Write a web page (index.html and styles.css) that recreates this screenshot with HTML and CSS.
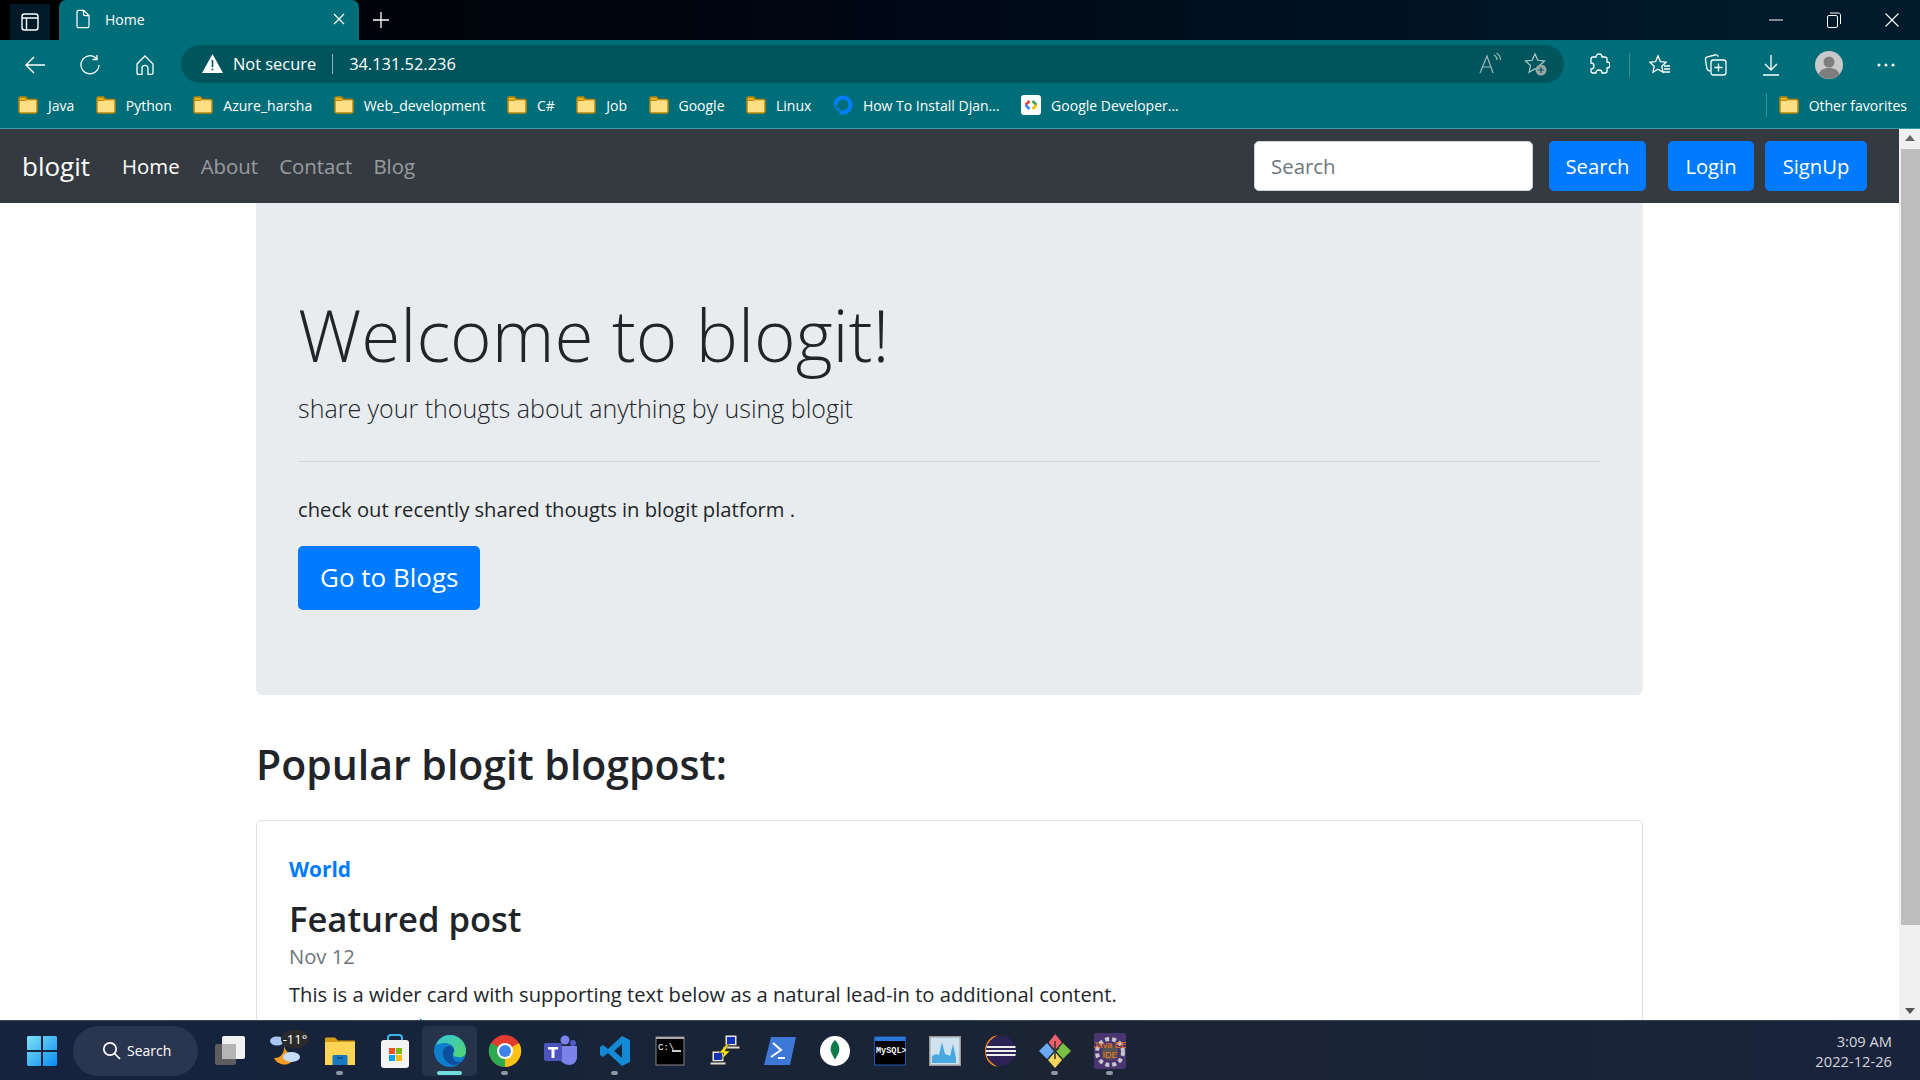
FILE: index.html
```html
<!DOCTYPE html>
<html lang="en">
<head>
    <meta charset="UTF-8">
    <title>Home</title>
    <link rel="stylesheet" href="styles.css">
</head>
<body>
    <svg class="defs" width="0" height="0">
        <symbol id="folder" viewBox="0 0 20 20">
            <path d="M1 3.500C1 2.700 1.600 2 2.400 2h5l2 2.500h8.200c.8 0 1.400.6 1.400 1.400v10.700c0 .8-.6 1.400-1.400 1.400H2.400c-.8 0-1.400-.6-1.400-1.400z" fill="#ffdf85" stroke="#b8860b" stroke-width="1.500"/>
            <path d="M1.500 5.500V3.500c0-.6.4-1 1-1h4.700l1.600 2.200-1 .8z" fill="#e9b022" stroke="#b8860b"/>
        </symbol>
    </svg>

    <header class="tabstrip">
        <div class="sidebar-btn">
            <svg width="20" height="20" viewBox="0 0 20 20" fill="none" stroke="#fff" stroke-width="1.400"><rect x="2" y="2" width="16" height="16" rx="2.500"/><path d="M2 6h16M6.500 6v12"/></svg>
        </div>
        <div class="tab">
            <svg width="18" height="20" viewBox="0 0 18 20" fill="none" stroke="#fff" stroke-width="1.200"><path d="M3 3c0-1 .7-1.700 1.700-1.700h5L15 6.600V17c0 1-.7 1.700-1.700 1.700H4.700C3.700 18.700 3 18 3 17zM9.500 1.500V5c0 1 .7 1.700 1.700 1.700h3.600"/></svg>
            <span class="tab-title">Home</span>
            <svg class="tab-close" width="12" height="12" viewBox="0 0 12 12" stroke="#fff" stroke-width="1.200"><path d="M1 1l10 10M11 1L1 11"/></svg>
        </div>
        <svg class="new-tab" width="18" height="18" viewBox="0 0 18 18" stroke="#fff" stroke-width="1.300"><path d="M9 1v16M1 9h16"/></svg>
        <div class="win-controls">
            <svg width="14" height="14" viewBox="0 0 14 14" stroke="#fff"><path d="M0 7h14"/></svg>
            <svg width="14" height="16" viewBox="0 0 14 16" fill="none" stroke="#fff"><rect x=".5" y="3.500" width="10" height="12" rx="1.500"/><path d="M3 1h8.500c1 0 2 1 2 2v9"/></svg>
            <svg width="14" height="14" viewBox="0 0 14 14" stroke="#fff" stroke-width="1.100"><path d="M.5.500l13 13M13.500.500l-13 13"/></svg>
        </div>
    </header>

    <nav class="toolbar">
        <svg class="tool back" width="22" height="20" viewBox="0 0 22 20" fill="none" stroke="#fff" stroke-width="1.400"><path d="M21 10H2M10 2l-8 8 8 8"/></svg>
        <svg class="tool reload" width="22" height="22" viewBox="0 0 22 22" fill="none" stroke="#fff" stroke-width="1.300"><path d="M17.500 4.500A9 9 0 1 0 20 11M18 1v4.500h-4.500"/></svg>
        <svg class="tool home" width="20" height="22" viewBox="0 0 20 22" fill="none" stroke="#fff" stroke-width="1.300"><path d="M2 10l8-8 8 8v9c0 .8-.6 1.400-1.400 1.400H13v-6a3 3 0 0 0-6 0v6H3.400C2.600 20.400 2 19.800 2 19z"/></svg>
        <div class="address">
            <svg width="21" height="19" viewBox="0 0 21 19"><path d="M10.500 0L21 19H0z" fill="#fff"/><path d="M9.700 6h1.600v7H9.700zM9.700 14.500h1.600v1.700H9.700z" fill="#00555d"/></svg>
            <span class="not-secure">Not secure</span>
            <span class="addr-sep"></span>
            <span class="url">34.131.52.236</span>
            <svg class="read-aloud" width="24" height="22" viewBox="0 0 24 22" fill="none" stroke="#9fb9bc" stroke-width="1.200"><path d="M2 20L9 3l6 17M4.500 14h9M16 2c2 1 3 3 3 5M18.500 0c2.500 1.500 4 4 4 7"/></svg>
            <svg class="fav-add" width="24" height="24" viewBox="0 0 24 24"><path d="M11 2l2.800 6.300 6.700.7-5 4.500 1.400 6.700-5.900-3.400-5.900 3.400L6.500 13.500l-5-4.500 6.700-.7z" fill="none" stroke="#b5c9cb" stroke-width="1.200"/><circle cx="17" cy="18" r="5.500" fill="#9aa5a6"/><path d="M17 15v6M14 18h6" stroke="#00555d" stroke-width="1.200"/></svg>
        </div>
        <div class="tool-group">
            <svg class="t-ext" width="22" height="24" viewBox="0 0 22 24" fill="none" stroke="#fff" stroke-width="1.300"><path d="M8 4a3 3 0 0 1 6 0h3c1 0 2 1 2 2v3a3 3 0 0 1 0 6v3c0 1-1 2-2 2h-3a3 3 0 0 0-6 0H5c-1 0-2-1-2-2v-2a3 3 0 0 0 0-6V6c0-1 1-2 2-2z"/></svg>
            <span class="tool-sep"></span>
            <svg class="t-favs" width="24" height="22" viewBox="0 0 24 22" fill="none" stroke="#fff" stroke-width="1.300"><path d="M10 2l2.400 5.600 5.600.6-4.200 4 1.200 6-5-3-5 3 1.200-6-4.200-4 5.600-.6zM16 12h6M16 15h6M14 18h8"/></svg>
            <svg class="t-coll" width="24" height="24" viewBox="0 0 24 24" fill="none" stroke="#fff" stroke-width="1.300"><path d="M6 18c-1.500 0-2.500-.8-3-2.200L1.500 7c-.3-1.500.5-2.800 2-3.200L11 2c1.500-.3 2.800.5 3.200 1.700"/><rect x="7" y="7" width="15" height="15" rx="2.500"/><path d="M14.500 10.500v8M10.500 14.500h8"/></svg>
            <svg class="t-down" width="20" height="24" viewBox="0 0 20 24" fill="none" stroke="#fff" stroke-width="1.300"><path d="M10 2v15M4 11l6 6 6-6M2 22h16"/></svg>
            <svg class="t-profile" width="28" height="28" viewBox="0 0 28 28"><circle cx="14" cy="14" r="14" fill="#c9c9c9"/><circle cx="14" cy="11" r="5.500" fill="#7d7d7d"/><path d="M3.500 23c2-4.500 6-6 10.500-6s8.500 1.500 10.500 6a14 14 0 0 1-21 0z" fill="#7d7d7d"/></svg>
            <svg class="t-dots" width="18" height="4" viewBox="0 0 18 4" fill="#fff"><circle cx="2" cy="2" r="1.500"/><circle cx="9" cy="2" r="1.500"/><circle cx="16" cy="2" r="1.500"/></svg>
        </div>
    </nav>

    <div class="bookmarks">
        <a class="bookmark"><svg width="20" height="20"><use href="#folder"/></svg>Java</a>
        <a class="bookmark"><svg width="20" height="20"><use href="#folder"/></svg>Python</a>
        <a class="bookmark"><svg width="20" height="20"><use href="#folder"/></svg>Azure_harsha</a>
        <a class="bookmark"><svg width="20" height="20"><use href="#folder"/></svg>Web_development</a>
        <a class="bookmark"><svg width="20" height="20"><use href="#folder"/></svg>C#</a>
        <a class="bookmark"><svg width="20" height="20"><use href="#folder"/></svg>Job</a>
        <a class="bookmark"><svg width="20" height="20"><use href="#folder"/></svg>Google</a>
        <a class="bookmark"><svg width="20" height="20"><use href="#folder"/></svg>Linux</a>
        <a class="bookmark"><svg width="20" height="20" viewBox="0 0 20 20"><path d="M10 19.500v-4a5.500 5.500 0 1 0-5.500-5.500H.5a9.500 9.500 0 1 1 9.500 9.500z" fill="#0080ff"/><path d="M6.500 15.500H10v4H6.500zM3.500 13h3v2.500h-3zM1.500 10.500h2V13h-2z" fill="#0080ff"/></svg>How To Install Djan...</a>
        <a class="bookmark"><svg width="20" height="20" viewBox="0 0 20 20" fill="none" stroke-width="2.600"><rect width="20" height="20" rx="3" fill="#fff"/><path d="M8.500 6L4.500 10" stroke="#ea4335"/><path d="M4.500 10l4 4" stroke="#4285f4"/><path d="M11.500 6l4 4" stroke="#34a853"/><path d="M15.500 10l-4 4" stroke="#fbbc04"/></svg>Google Developer...</a>
        <span class="bm-sep"></span>
        <a class="bookmark"><svg width="20" height="20"><use href="#folder"/></svg>Other favorites</a>
    </div>

    <div class="viewport">
        <div class="page">
            <div class="site-nav">
                <a class="brand">blogit</a>
                <a class="nav-link active">Home</a>
                <a class="nav-link">About</a>
                <a class="nav-link">Contact</a>
                <a class="nav-link">Blog</a>
                <input class="search-input" type="text" placeholder="Search">
                <a class="btn search-btn">Search</a>
                <a class="btn login-btn">Login</a>
                <a class="btn signup-btn">SignUp</a>
            </div>
            <div class="container">
                <div class="hero">
                    <h1>Welcome to blogit!</h1>
                    <p class="lead">share your thougts about anything by using blogit</p>
                    <hr>
                    <p class="hero-text">check out recently shared thougts in blogit platform .</p>
                    <a class="btn btn-lg">Go to Blogs</a>
                </div>
                <h2>Popular blogit blogpost:</h2>
                <div class="card">
                    <a class="category">World</a>
                    <h3>Featured post</h3>
                    <div class="post-date">Nov 12</div>
                    <p class="post-text">This is a wider card with supporting text below as a natural lead-in to additional content.</p>
                    <a class="read-more">Continue reading</a>
                </div>
            </div>
        </div>
        <div class="scrollbar">
            <span class="arrow-up"></span>
            <span class="thumb"></span>
            <span class="arrow-down"></span>
        </div>
    </div>

    <footer class="taskbar">
        <svg class="start" width="32" height="32" viewBox="0 0 32 32"><defs><linearGradient id="winblue" x1="0" y1="0" x2="1" y2="1"><stop offset="0" stop-color="#7fe0f8"/><stop offset="1" stop-color="#0a8cf0"/></linearGradient></defs><path d="M1 2.500C1 1.700 1.700 1 2.500 1H15v14H1zM17 1h12.500c.8 0 1.500.7 1.500 1.500V15H17zM1 17h14v14H2.500C1.700 31 1 30.300 1 29.500zM17 17h14v12.500c0 .8-.7 1.500-1.500 1.500H17z" fill="url(#winblue)"/></svg>
        <div class="task-search">
            <svg width="20" height="20" viewBox="0 0 20 20" fill="none" stroke="#fff" stroke-width="1.700"><circle cx="8" cy="8" r="6.200"/><path d="M12.500 12.500L18 18"/></svg>
            <span>Search</span>
        </div>
        <div class="task-icons">
            <div class="task-item">
                <svg width="32" height="32" viewBox="0 0 32 32"><rect x="1" y="9" width="21" height="21" rx="2" fill="#5e5e5e"/><rect x="8" y="1" width="23" height="23" rx="2" fill="#f2f2f2"/><rect x="8" y="9" width="14" height="15" fill="#b5b5b5"/></svg>
            </div>
            <div class="task-item">
                <svg class="weather" width="36" height="36" viewBox="0 0 36 36"><path d="M17 12c1 6 5 10 12 10-3 8-9 11-15 9-3-1-6-3-7-6 6 1 11-5 10-13z" fill="#f59a23"/><ellipse cx="10" cy="8" rx="7" ry="4.500" fill="#a7c7f0"/><ellipse cx="24.500" cy="24" rx="8.500" ry="5" fill="#c6ddf7"/><ellipse cx="28" cy="6" rx="14" ry="9.500" fill="#2b2b2b"/><text class="temp" x="28" y="10.500">-11°</text></svg>
            </div>
            <div class="task-item running">
                <svg width="32" height="32" viewBox="0 0 32 32"><path d="M1 4c0-1 .7-1.500 1.500-1.500H11l3 3h16c.6 0 1 .4 1 1V8H1z" fill="#d89c15"/><path d="M1 7h30v23H1z" fill="#fcd455"/><path d="M10 20h12c1 0 1.500.6 1.500 1.500V30h-15v-8.500c0-.9.5-1.500 1.500-1.500z" fill="#1a78c2"/><path d="M13 23h6" stroke="#0b4a80" stroke-width="1.500"/></svg>
            </div>
            <div class="task-item">
                <svg width="32" height="36" viewBox="0 0 32 36"><path d="M9 9V5c0-2 1-3 3-3h8c2 0 3 1 3 3v4" fill="none" stroke="#35b8e8" stroke-width="2"/><rect x="2" y="7" width="28" height="28" rx="3" fill="#f4f4f4"/><path d="M10 15h6v6h-6z" fill="#f25022"/><path d="M17 15h6v6h-6z" fill="#7fba00"/><path d="M10 22h6v6h-6z" fill="#00a4ef"/><path d="M17 22h6v6h-6z" fill="#ffb900"/></svg>
            </div>
            <div class="task-item active">
                <svg width="34" height="34" viewBox="0 0 34 34"><defs><linearGradient id="edgeg" x1="0" y1="0" x2="1" y2="1"><stop offset="0" stop-color="#36c5d8"/><stop offset="1" stop-color="#53d66b"/></linearGradient></defs><circle cx="17" cy="17" r="16" fill="#0e7ecb"/><path d="M3 11C6 4 11 1 17 1c9 0 16 7 16 16 0 5-4 7-8 6-3 0-5-1-5-3 1-1 2-2 1-5-1-4-5-6-9-6-4 0-7 1-9 2z" fill="url(#edgeg)"/><path d="M17 12c-5 0-8 4-7 9 1 5 5 9 10 10 4 0 7-1 10-4-4 2-8 1-10-3-1-3 0-6 1-8 0-2-2-4-4-4z" fill="#0c4f9c"/></svg>
            </div>
            <div class="task-item running">
                <svg width="34" height="34" viewBox="0 0 34 34"><circle cx="17" cy="17" r="16" fill="#e33b2e"/><path d="M17 17L31 9a16 16 0 0 1-14 24z" fill="#fbc116"/><path d="M17 17L17 33A16 16 0 0 1 3 9z" fill="#2da94f"/><circle cx="17" cy="17" r="8" fill="#fff"/><circle cx="17" cy="17" r="6" fill="#3f83ea"/></svg>
            </div>
            <div class="task-item">
                <svg width="34" height="32" viewBox="0 0 34 32"><circle cx="22" cy="5" r="4.500" fill="#7b83eb"/><circle cx="30" cy="8" r="3" fill="#5059c9"/><path d="M15 11h19v11c0 5-4 8-8 8s-8-3-11-8z" fill="#7b83eb"/><rect x="1" y="8" width="18" height="18" rx="2" fill="#4b53bc"/><path d="M5 12h10v2.500h-3.500V23h-3v-8.500H5z" fill="#fff"/></svg>
            </div>
            <div class="task-item running">
                <svg width="32" height="32" viewBox="0 0 32 32"><path d="M23 1l8 4v22l-8 4L9 18l-5 4-3-2V12l3-2 5 4zM23 9l-8 7 8 7z" fill="#1489d6"/></svg>
            </div>
            <div class="task-item">
                <svg width="30" height="30" viewBox="0 0 30 30"><rect x="1" y="1" width="28" height="28" fill="#000" stroke="#888"/><rect x="1" y="1" width="28" height="2" fill="#aaa"/><text class="cmd" x="3" y="14">C:\</text><path d="M17 15h9" stroke="#fff" stroke-width="1.600"/></svg>
            </div>
            <div class="task-item">
                <svg width="32" height="36" viewBox="0 0 32 36"><rect x="16" y="2" width="12" height="11" fill="#e8e8e8" stroke="#222"/><rect x="18" y="4" width="8" height="7" fill="#1432b8"/><path d="M14 13h17v3H14z" fill="#ddd" stroke="#222"/><rect x="3" y="18" width="12" height="11" fill="#e8e8e8" stroke="#222"/><rect x="5" y="20" width="8" height="7" fill="#1432b8"/><path d="M1 29h16v3H1z" fill="#ddd" stroke="#222"/><path d="M18 11l-8 9h5l-3 7 9-9h-5l4-7z" fill="#f4e612" stroke="#333" stroke-width=".5"/></svg>
            </div>
            <div class="task-item">
                <svg width="32" height="30" viewBox="0 0 32 30"><path d="M7 1h25l-6 28H0z" fill="#3d78d8"/><path d="M9 7l8 7-10 7" fill="none" stroke="#fff" stroke-width="2"/><path d="M14 22h7" stroke="#fff" stroke-width="2"/></svg>
            </div>
            <div class="task-item">
                <svg width="32" height="32" viewBox="0 0 32 32"><circle cx="16" cy="16" r="15" fill="#fff"/><path d="M16 5c4 4 5 8 4 12-1 3-3 5-3.500 7h-1c-.5-2-2.500-4-3.500-7-1-4 0-8 4-12z" fill="#0f7a4a"/></svg>
            </div>
            <div class="task-item">
                <svg width="32" height="30" viewBox="0 0 32 30"><rect x=".5" y="1" width="31" height="28" fill="#000" stroke="#1e5cb3"/><rect x="1" y="1" width="30" height="4" fill="#2a78d8"/><text class="mysql" x="2" y="17">MySQL&gt;</text></svg>
            </div>
            <div class="task-item">
                <svg width="32" height="30" viewBox="0 0 32 30"><rect x=".5" y=".5" width="31" height="29" fill="#cfe2f0" stroke="#9a9a9a" stroke-width="2"/><path d="M3 27V20l4-2 3 1 3-13 3 12 3 1 2 1 3-12 3 14v5z" fill="#4aa8e0"/></svg>
            </div>
            <div class="task-item">
                <svg width="32" height="34" viewBox="0 0 32 34"><path d="M14 1C6 2 1 9 1 17s5 15 13 16C8 30 5 24 5 17S8 4 14 1z" fill="#f08a1d"/><circle cx="17" cy="17" r="15" fill="#2c2255"/><path d="M2.500 13h29M2 17h30M2.500 21h29" stroke="#eee" stroke-width="2"/></svg>
            </div>
            <div class="task-item running">
                <svg width="32" height="36" viewBox="0 0 32 36"><path d="M16 1l7 9-7 8-7-8z" fill="#f0606a" transform="translate(1 0) scale(.95)"/><path d="M8 10l7 8-7 8-8-8z" fill="#6aa9f5"/><path d="M24 10l8 8-8 8-7-8z" fill="#7ac143"/><path d="M16 19l7 8-7 8-7-8z" fill="#f6d55c"/><path d="M16 8v18M12 14l4 4 4-3" fill="none" stroke="#333" stroke-width="1.500"/></svg>
            </div>
            <div class="task-item running">
                <svg width="32" height="36" viewBox="0 0 32 36"><rect width="32" height="36" rx="2" fill="#4a3572"/><circle cx="16" cy="19" r="13" fill="none" stroke="#c8c8c8" stroke-width="4" stroke-dasharray="4 3"/><circle cx="16" cy="19" r="8" fill="#555"/><text class="java" x="16" y="15">Java EE</text><text class="java" x="16" y="25">IDE</text></svg>
            </div>
        </div>
        <div class="clock">
            <span>3:09 AM</span>
            <span>2022-12-26</span>
        </div>
    </footer>
</body>
</html>
```

FILE: styles.css
```css
* {
    box-sizing: border-box;
}
html, body {
    margin: 0;
    padding: 0;
    height: 1080px;
    overflow: hidden;
}
body {
    display: flex;
    flex-direction: column;
    width: 1920px;
    font-family: "Open Sans", "Noto Sans", sans-serif;
    background-color: #fff;
    color: #212529;
}
.defs {
    position: absolute;
}

/* browser chrome */
.tabstrip {
    height: 40px;
    flex: none;
    display: flex;
    align-items: center;
    background: linear-gradient(90deg, #000 0%, #000714 45%, #001a2b 90%, #001a2b 100%);
    color: white;
}
.sidebar-btn {
    width: 40px;
    height: 36px;
    margin-left: 10px;
    margin-top: 4px;
    background-color: #001a2a;
    display: flex;
    align-items: center;
    justify-content: center;
}
.tab {
    width: 300px;
    height: 40px;
    margin-left: 9px;
    padding: 0 14px 2px 15px;
    background-color: #006e79;
    border-radius: 7px 7px 0 0;
    display: flex;
    align-items: center;
    font-size: 14px;
}
.tab-title {
    margin-left: 13px;
}
.tab-close {
    margin-left: auto;
}
.new-tab {
    margin-left: 13px;
}
.win-controls {
    margin-left: auto;
    display: flex;
    align-items: center;
    gap: 44px;
    padding-right: 21px;
}
.toolbar {
    height: 44px;
    flex: none;
    padding-top: 5px;
    display: flex;
    background-color: #006e79;
    color: white;
}
.tool {
    align-self: center;
    flex: none;
}
.back {
    margin-left: 24px;
}
.reload {
    margin-left: 33px;
}
.home {
    margin-left: 34px;
}
.address {
    width: 1383px;
    height: 38px;
    margin-left: 26px;
    padding-left: 21px;
    padding-right: 16px;
    padding-bottom: 1px;
    background-color: #00555d;
    border-radius: 19px;
    display: flex;
    align-items: center;
    font-size: 16.400px;
}
.not-secure {
    margin-left: 10px;
}
.addr-sep {
    width: 1px;
    height: 20px;
    margin: 0 16px;
    background-color: #8fb2b5;
}
.read-aloud {
    margin-left: auto;
}
.fav-add {
    margin-left: 22px;
}
.tool-group {
    flex: 1;
    display: flex;
    align-items: center;
}
.t-ext {
    margin-left: 24px;
}
.tool-sep {
    width: 1px;
    height: 24px;
    margin-left: 19px;
    background-color: #3e9097;
}
.t-favs {
    margin-left: 18px;
}
.t-coll {
    margin-left: 32px;
}
.t-down {
    margin-left: 33px;
}
.t-profile {
    margin-left: 34px;
}
.t-dots {
    margin-left: 34px;
}
.bookmarks {
    height: 45px;
    flex: none;
    padding: 0 13px 2px 18px;
    display: flex;
    align-items: center;
    gap: 21.500px;
    background-color: #006e79;
    border-bottom: 1px solid #3a9aa3;
    font-size: 14px;
}
.bookmark {
    display: flex;
    align-items: center;
    gap: 10px;
    color: white;
    white-space: nowrap;
}
.bm-sep {
    width: 1px;
    height: 24px;
    margin-left: auto;
    margin-right: -10px;
    background-color: #3e9097;
}

/* page */
.viewport {
    flex: 1;
    display: flex;
    min-height: 0;
}
.page {
    flex: 1;
    min-width: 0;
    overflow: hidden;
    font-size: 20.200px;
    line-height: 1.5;
}
.site-nav {
    height: 74px;
    padding-left: 22px;
    padding-right: 32px;
    display: flex;
    align-items: center;
    background-color: #343a40;
}
.brand {
    margin-right: 32px;
    font-size: 26px;
    color: white;
}
.nav-link {
    margin-right: 21px;
    font-size: 20.400px;
    color: rgba(255, 255, 255, .5);
}
.nav-link.active {
    color: white;
}
.search-input {
    width: 279px;
    height: 50px;
    margin-left: auto;
    margin-right: 16px;
    padding: 0 16px;
    border: 1px solid #ced4da;
    border-radius: 5px;
    font-family: inherit;
    font-size: 20.400px;
    color: #495057;
}
.search-input::placeholder {
    color: #6c757d;
}
.btn {
    display: inline-block;
    padding: 10px 0 0;
    height: 50px;
    background-color: #007bff;
    border-radius: 5px;
    color: white;
    text-align: center;
    white-space: nowrap;
}
.search-btn {
    width: 97px;
    margin-right: 22px;
}
.login-btn {
    width: 86px;
    margin-right: 11px;
}
.signup-btn {
    width: 102px;
}
.container {
    width: 1387px;
    margin-left: 256px;
}
.hero {
    height: 492px;
    padding: 90px 42px 0;
    background-color: #e9ecef;
    border-radius: 0 0 6px 6px;
}
h1 {
    margin: 0;
    font-size: 71px;
    font-weight: 300;
    line-height: 84px;
}
.lead {
    margin: 13px 0 0;
    font-size: 25px;
    font-weight: 300;
    line-height: 37px;
}
hr {
    margin: 34px 0 0;
    border: 0;
    border-top: 1px solid #d3d6d9;
}
.hero-text {
    margin: 32px 0 0;
}
.btn-lg {
    height: 64px;
    margin-top: 22px;
    padding: 13px 22px;
    font-size: 26px;
    line-height: 37px;
}
h2 {
    margin: 45px 0 0;
    font-size: 41px;
    font-weight: 600;
    line-height: 48px;
}
.card {
    margin-top: 32px;
    padding: 33px 32px 0;
    height: 300px;
    border: 1px solid #dfdfdf;
    border-radius: 5px;
}
.category {
    display: block;
    font-size: 20.800px;
    font-weight: 700;
    color: #007bff;
}
h3 {
    margin: 10px 0 0;
    font-size: 34.600px;
    font-weight: 600;
    line-height: 48px;
}
.post-date {
    margin-top: -2px;
    color: #6c757d;
}
.post-text {
    margin: 8px 0 0;
}
.read-more {
    display: block;
    margin-top: 1px;
    color: #007bff;
}
.scrollbar {
    width: 21px;
    flex: none;
    padding: 6px 0;
    display: flex;
    flex-direction: column;
    align-items: center;
    background-color: #f0f0f0;
}
.arrow-up {
    border: 5px solid transparent;
    border-top: 0;
    border-bottom: 6px solid #666;
}
.thumb {
    width: 19px;
    height: 776px;
    margin-top: 8px;
    align-self: flex-end;
    background-color: #bdbdbd;
}
.arrow-down {
    margin-top: auto;
    border: 5px solid transparent;
    border-bottom: 0;
    border-top: 6px solid #555;
}

/* windows taskbar */
.taskbar {
    height: 60px;
    flex: none;
    display: flex;
    align-items: center;
    padding-left: 26px;
    background: linear-gradient(90deg, #15233f 0%, #1a2433 55%, #19233c 100%);
    border-top: 1px solid #3a4452;
}
.start {
    flex: none;
}
.task-search {
    width: 125px;
    height: 50px;
    margin-left: 15px;
    padding-left: 29px;
    display: flex;
    align-items: center;
    gap: 5px;
    background-color: #2a3650;
    border-radius: 25px;
    color: white;
    font-size: 14px;
}
.task-icons {
    margin-left: 4px;
    display: flex;
}
.task-item {
    width: 55px;
    height: 50px;
    position: relative;
    display: flex;
    align-items: center;
    justify-content: center;
}
.task-item.running::after,
.task-item.active::after {
    content: "";
    position: absolute;
    left: 24px;
    bottom: 1px;
    width: 7px;
    height: 4px;
    border-radius: 2px;
    background-color: #8d97a3;
}
.task-item.active {
    background-color: #27334a;
    border-radius: 5px;
}
.task-item.active::after {
    left: 15px;
    width: 25px;
    background-color: #6fdcdc;
}
.weather {
    overflow: visible;
}
.temp {
    font-size: 13px;
    fill: white;
    text-anchor: middle;
}
.cmd {
    font-size: 9px;
    fill: white;
    font-family: "Liberation Mono", monospace;
}
.mysql {
    font-size: 8.500px;
    fill: white;
    font-family: "Liberation Mono", monospace;
    font-weight: bold;
}
.java {
    font-size: 9px;
    fill: #f07b16;
    text-anchor: middle;
    font-family: "Liberation Sans", sans-serif;
}
.clock {
    margin-left: auto;
    padding-right: 28px;
    display: flex;
    flex-direction: column;
    align-items: flex-end;
    gap: 4px;
    font-size: 14.700px;
    line-height: 16px;
    color: #d5d8dd;
}
```
